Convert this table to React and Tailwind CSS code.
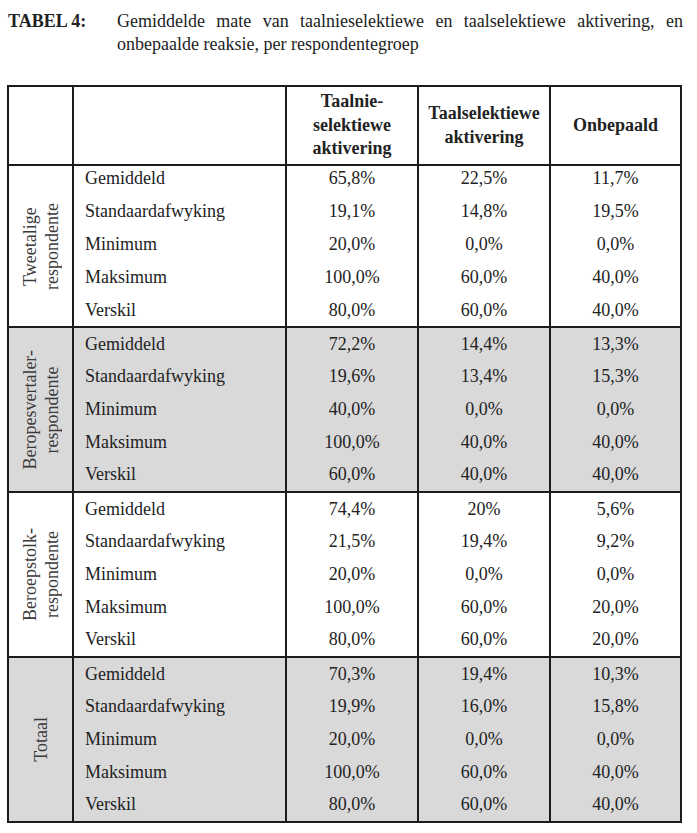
const groups = [
  {
    label: ['Tweetalige', 'respondente'],
    shaded: false,
    rows: [
      ['Gemiddeld', '65,8%', '22,5%', '11,7%'],
      ['Standaardafwyking', '19,1%', '14,8%', '19,5%'],
      ['Minimum', '20,0%', '0,0%', '0,0%'],
      ['Maksimum', '100,0%', '60,0%', '40,0%'],
      ['Verskil', '80,0%', '60,0%', '40,0%'],
    ],
  },
  {
    label: ['Beropesvertaler-', 'respondente'],
    shaded: true,
    rows: [
      ['Gemiddeld', '72,2%', '14,4%', '13,3%'],
      ['Standaardafwyking', '19,6%', '13,4%', '15,3%'],
      ['Minimum', '40,0%', '0,0%', '0,0%'],
      ['Maksimum', '100,0%', '40,0%', '40,0%'],
      ['Verskil', '60,0%', '40,0%', '40,0%'],
    ],
  },
  {
    label: ['Beroepstolk-', 'respondente'],
    shaded: false,
    rows: [
      ['Gemiddeld', '74,4%', '20%', '5,6%'],
      ['Standaardafwyking', '21,5%', '19,4%', '9,2%'],
      ['Minimum', '20,0%', '0,0%', '0,0%'],
      ['Maksimum', '100,0%', '60,0%', '20,0%'],
      ['Verskil', '80,0%', '60,0%', '20,0%'],
    ],
  },
  {
    label: ['Totaal'],
    shaded: true,
    rows: [
      ['Gemiddeld', '70,3%', '19,4%', '10,3%'],
      ['Standaardafwyking', '19,9%', '16,0%', '15,8%'],
      ['Minimum', '20,0%', '0,0%', '0,0%'],
      ['Maksimum', '100,0%', '60,0%', '40,0%'],
      ['Verskil', '80,0%', '60,0%', '40,0%'],
    ],
  },
]

// heights are border-box: group 1 is a little tighter in the scan
const heights = ['h-[162px]', 'h-[165px]', 'h-[165px]', 'h-[163px]']

function Group({ group, idx, last }) {
  const first = idx === 0
  return (
    <div
      className={`flex ${heights[idx]} ${last ? '' : 'border-b-2 border-[#1c1c1c]'} ${
        group.shaded ? 'bg-[#d9d9d9]' : 'bg-white'
      }`}
    >
      <div className="w-[65px] shrink-0 border-r-2 border-[#1c1c1c] flex items-center justify-center">
        <span className="[writing-mode:vertical-rl] rotate-180 text-center leading-[22px] text-[#3a3a3a]">
          {group.label.map((l, i) => (
            <span key={i} className="block">
              {l}
            </span>
          ))}
        </span>
      </div>
      <div className={`flex-1 flex flex-col ${first ? '-mt-[4px]' : ''}`}>
        {group.rows.map((r, i) => (
          <div key={i} className={`flex items-center ${first ? 'h-[33px] shrink-0' : 'flex-1'}`}>
            <div className="w-[213px] shrink-0 h-full border-r-2 border-[#1c1c1c] flex items-center pl-[11px]">
              {r[0]}
            </div>
            <div className="w-[132px] shrink-0 h-full border-r-2 border-[#1c1c1c] flex items-center justify-center">
              {r[1]}
            </div>
            <div className="w-[132px] shrink-0 h-full border-r-2 border-[#1c1c1c] flex items-center justify-center">
              {r[2]}
            </div>
            <div className="flex-1 h-full flex items-center justify-center">{r[3]}</div>
          </div>
        ))}
      </div>
    </div>
  )
}

export default function App() {
  return (
    <div className="w-[697px] h-[833px] bg-white text-[#222] text-[18px] font-[family-name:'Liberation_Serif',serif] overflow-hidden">
      <div className="flex pt-[10px] leading-[23px]">
        <div className="w-[117px] shrink-0 pl-[8px] font-bold">TABEL 4:</div>
        <p className="w-[566px] text-justify">
          Gemiddelde mate van taalnieselektiewe en taalselektiewe aktivering, en onbepaalde reaksie, per
          respondentegroep
        </p>
      </div>

      <div className="ml-[7px] mt-[29px] w-[675px] border-2 border-[#1c1c1c]">
        <div className="flex h-[79px] border-b-2 border-[#1c1c1c] font-bold leading-[23.5px]">
          <div className="w-[65px] shrink-0 border-r-2 border-[#1c1c1c]" />
          <div className="w-[213px] shrink-0 border-r-2 border-[#1c1c1c]" />
          <div className="w-[132px] shrink-0 border-r-2 border-[#1c1c1c] flex items-center justify-center text-center">
            <span>
              Taalnie-
              <br />
              selektiewe
              <br />
              aktivering
            </span>
          </div>
          <div className="w-[132px] shrink-0 border-r-2 border-[#1c1c1c] flex items-center justify-center text-center">
            <span>
              Taalselektiewe
              <br />
              aktivering
            </span>
          </div>
          <div className="flex-1 flex items-center justify-center">Onbepaald</div>
        </div>
        {groups.map((g, i) => (
          <Group key={i} group={g} idx={i} last={i === groups.length - 1} />
        ))}
      </div>
    </div>
  )
}
